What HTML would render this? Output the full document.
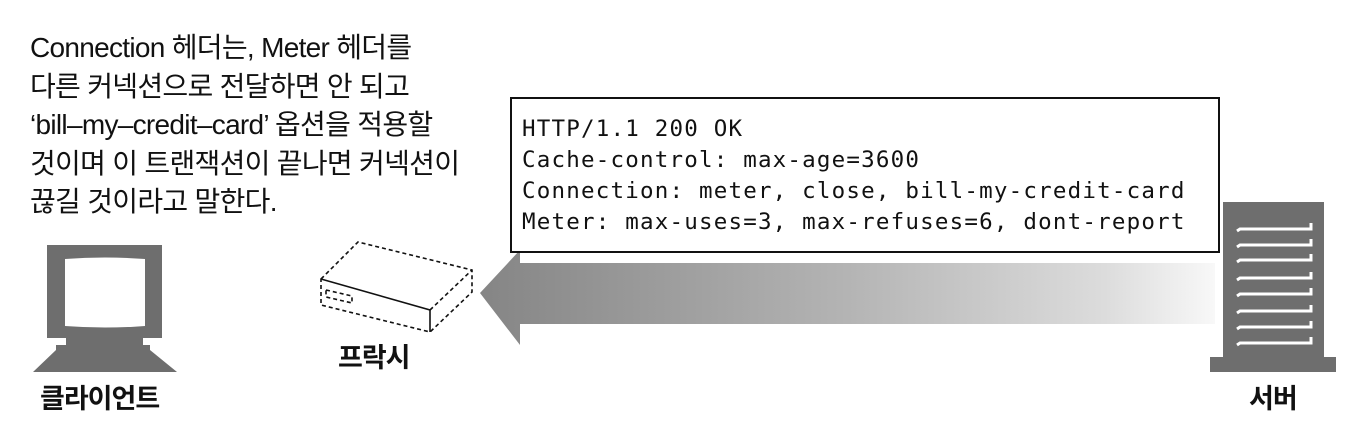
<!DOCTYPE html>
<html><head><meta charset="utf-8"><style>
body{margin:0;width:1370px;height:438px;background:#fff;position:relative;overflow:hidden;font-family:"Liberation Sans","Noto Sans CJK KR",sans-serif}
.t{position:absolute;left:30px;top:29px;font-size:28px;line-height:38.5px;letter-spacing:-0.7px;color:#111;white-space:nowrap}
.box{position:absolute;left:510px;top:97px;width:706px;height:152px;border:2px solid #111;background:#fff;box-sizing:content-box}
.code{position:absolute;left:522px;top:114px;font-family:"DejaVu Sans Mono","Liberation Mono",monospace;font-size:22.5px;line-height:31px;color:#111;white-space:pre;letter-spacing:1.2px}
.lbl{position:absolute;font-size:27px;font-weight:bold;color:#111;letter-spacing:-1px}
</style></head><body>
<div class="t">Connection 헤더는, Meter 헤더를<br>다른 커넥션으로 전달하면 안 되고<br>‘bill–my–credit–card’ 옵션을 적용할<br>것이며 이 트랜잭션이 끝나면 커넥션이<br>끊길 것이라고 말한다.</div>
<svg width="1370" height="438" style="position:absolute;left:0;top:0">
<defs><linearGradient id="g" x1="480" y1="0" x2="1215" y2="0" gradientUnits="userSpaceOnUse">
<stop offset="0" stop-color="#858585"/><stop offset="0.5" stop-color="#b4b4b4"/><stop offset="0.85" stop-color="#dcdcdc"/><stop offset="1" stop-color="#f8f8f8"/></linearGradient></defs>
<polygon points="480,293 520,250 520,263 1215,263 1215,324 520,324 520,345" fill="url(#g)"/>
<rect x="47" y="245" width="115" height="93" fill="#6e6e6e"/>
<path d="M65,259 Q105,256 145,259 L145,326 Q105,329 65,326 Z" fill="#fff"/>
<polygon points="66,338 143,338 143,345 150,345 150,350 177,372 33,372 56,350 56,345 66,345" fill="#6e6e6e"/>
<g fill="none" stroke="#111" stroke-width="1.6" stroke-dasharray="4,3">
<path d="M321,279 L358,242 L472,270 L472,292 L430,332 L321,305 Z"/>
<path d="M430,310 L472,270"/>
<path d="M326,290 L352,296 L352,303 L326,297 Z"/>
</g>
<path d="M321,279 L430,310 L430,332" fill="none" stroke="#111" stroke-width="1.6"/>
<rect x="1223" y="202" width="101" height="155" fill="#6e6e6e"/>
<rect x="1210" y="357" width="126" height="15" fill="#6e6e6e"/>
<g stroke="#fff" stroke-width="3" fill="none">
<path d="M1237,231 L1240,229 L1311,229 L1311,223"/>
<path d="M1237,247 L1240,245 L1311,245 L1311,239"/>
<path d="M1237,262 L1240,260 L1311,260 L1311,254"/>
<path d="M1237,280 L1240,278 L1311,278 L1311,272"/>
<path d="M1237,296 L1240,294 L1311,294 L1311,288"/>
<path d="M1237,313 L1240,311 L1311,311 L1311,305"/>
<path d="M1237,329 L1240,327 L1311,327 L1311,321"/>
<path d="M1237,345 L1240,343 L1311,343 L1311,337"/>
</g>
</svg>
<div class="box"></div>
<div class="code">HTTP/1.1 200 OK
Cache-control: max-age=3600
Connection: meter, close, bill-my-credit-card
Meter: max-uses=3, max-refuses=6, dont-report</div>
<div class="lbl" style="left:40px;top:377px">클라이언트</div>
<div class="lbl" style="left:338px;top:336px">프락시</div>
<div class="lbl" style="left:1249px;top:377px">서버</div>
</body></html>
